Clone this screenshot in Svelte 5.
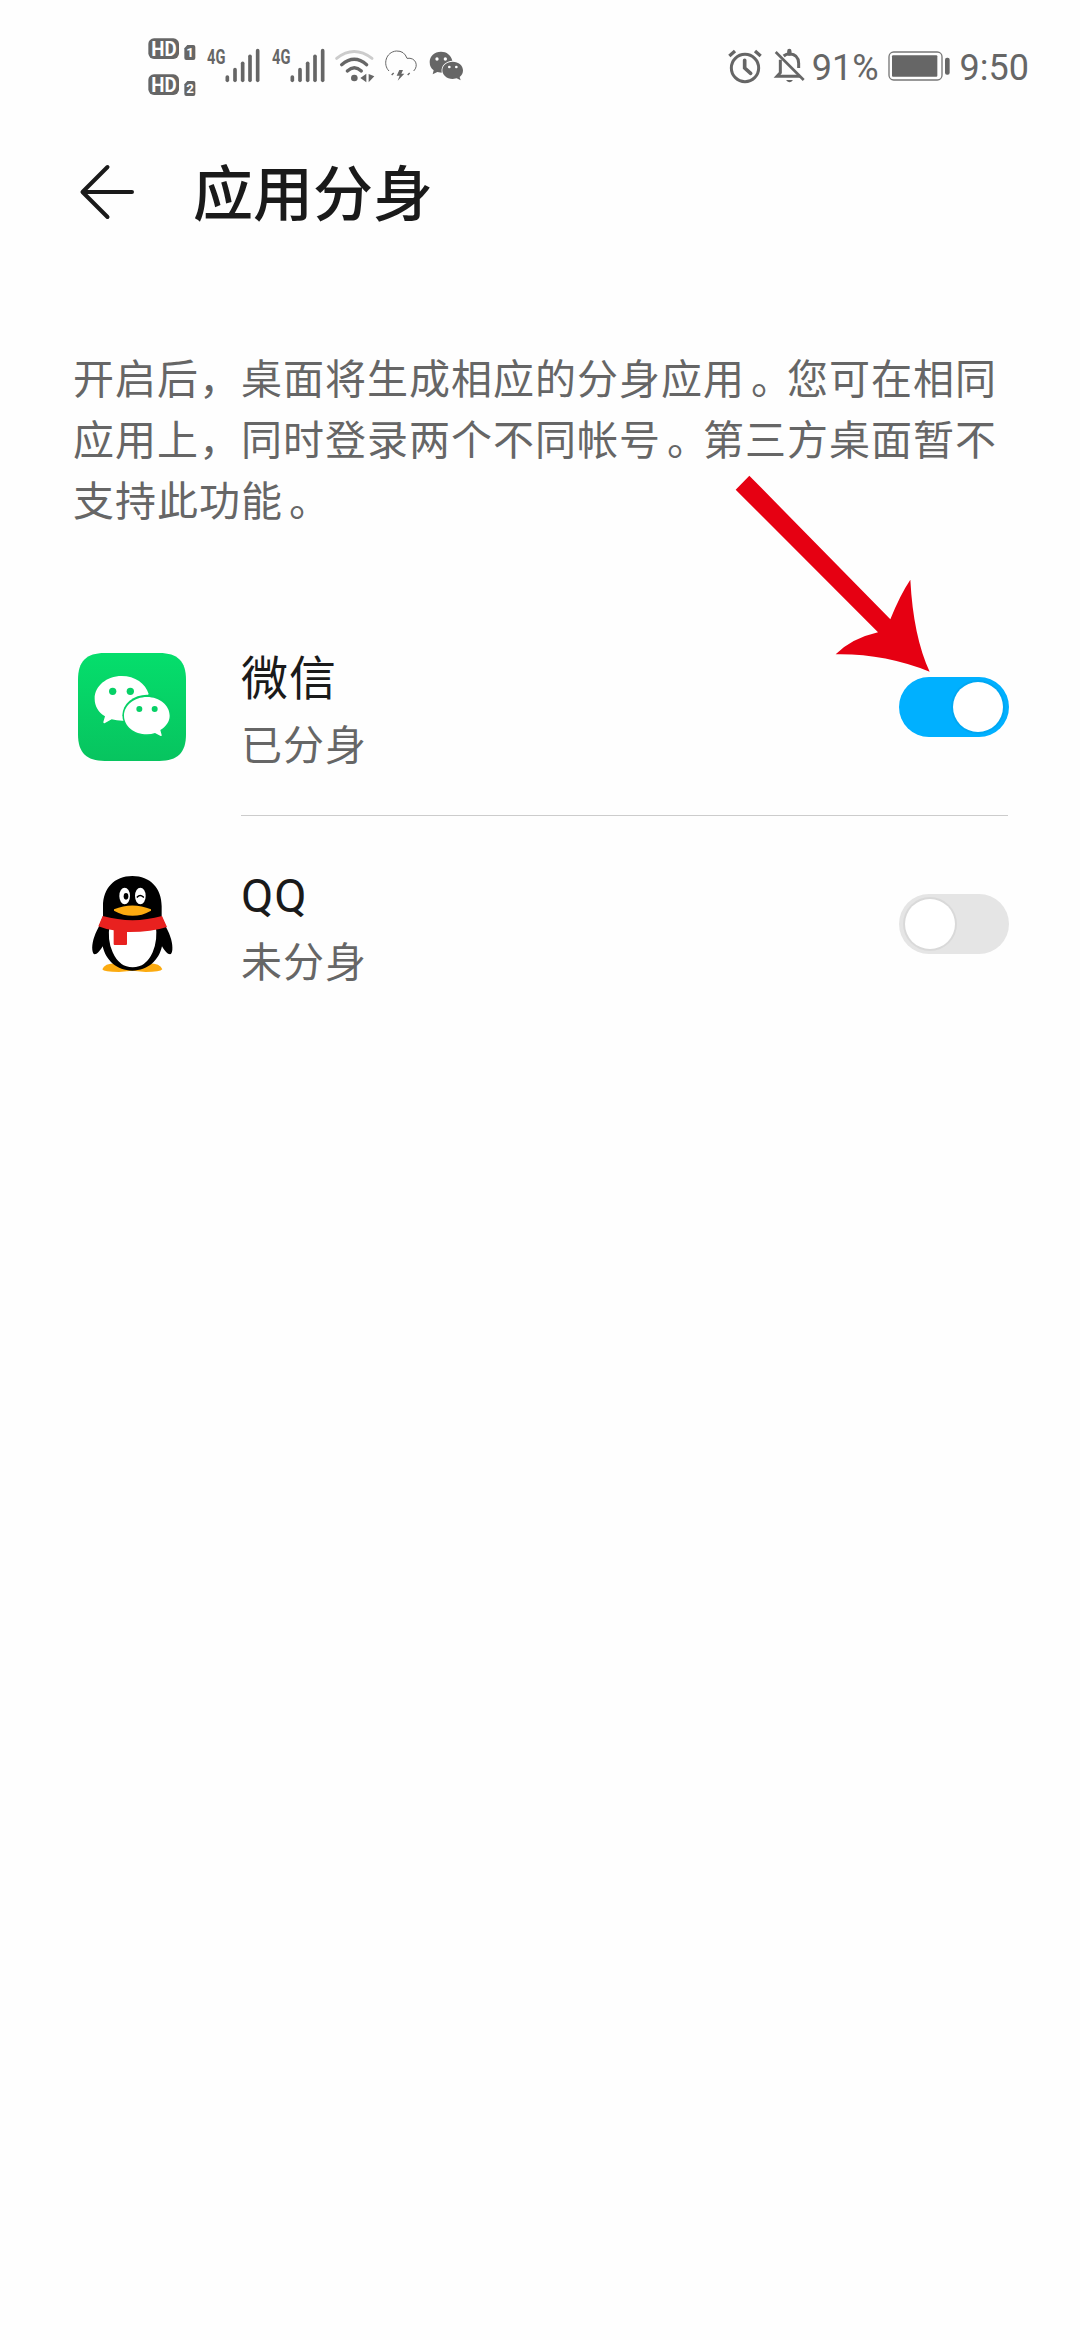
<script lang="ts">
	type App = { id: string; name: string; status: string; cloned: boolean };

	let apps: App[] = $state([
		{ id: 'wechat', name: '微信', status: '已分身', cloned: true },
		{ id: 'qq', name: 'QQ', status: '未分身', cloned: false }
	]);

	const sims = [1, 2];
	const bars = [
		{ x: 5, top: 86 },
		{ x: 28, top: 64 },
		{ x: 51, top: 45 },
		{ x: 73, top: 24 },
		{ x: 96, top: 7 }
	];

	function toggle(app: App) {
		app.cloned = !app.cloned;
		app.status = app.cloned ? '已分身' : '未分身';
	}
</script>

<div class="screen">
	<div class="statusbar">
		<div class="left">
			<div class="hd">
				{#each sims as sim}
					<svg width="48" height="22" viewBox="0 0 144 66">
						<rect x="1" y="1" width="92" height="62" rx="17" fill="#666" />
						<text x="10" y="53" class="hdtext" textLength="76" lengthAdjust="spacingAndGlyphs">HD</text>
						<path d="M109 31l9-10h18q6 0 6 6v33q0 6-6 6h-21q-6 0-6-6z" fill="#666" />
						<text x="126" y="58" class="simtext">{sim}</text>
					</svg>
				{/each}
			</div>
			{#each sims as sim}
				<svg class="signal" width="54" height="36" viewBox="0 0 162 108">
					<text x="0" y="48" class="net" textLength="55" lengthAdjust="spacingAndGlyphs">4G</text>
					{#each bars as bar}
						<path d="M{bar.x + 56} {bar.top + 1}V97" stroke="#666" stroke-width="11" stroke-linecap="round" />
					{/each}
				</svg>
			{/each}
			<svg class="wifi" width="40" height="36" viewBox="0 0 120 108" fill="none" stroke-linecap="round">
				<path d="M5 31Q57-10 111 31" stroke="#ccc" stroke-width="9" />
				<path d="M20 50Q58 18 95 50" stroke="#666" stroke-width="10" />
				<path d="M37 69Q58 50 79 69" stroke="#666" stroke-width="10" />
				<circle cx="58" cy="90" r="10" fill="#666" />
				<path d="M76 90l18-13v26zM118 85l-17-7v25z" fill="#666" />
			</svg>
			<svg class="cloud" width="32" height="34" viewBox="0 0 96 102" fill="none" stroke="#666" stroke-width="3">
				<path d="M12 66C-7 47 2 9 34 6q24-1 32 22c26-4 36 22 20 38" />
				<path d="M43 63h11l-5 11h9L38 95l6-15h-9z" fill="#666" stroke="none" />
				<path d="M26 72l-6 6M74 72l-6 6" stroke-width="4" />
			</svg>
			<svg class="chat" width="35" height="34" viewBox="0 0 105 102" fill="#666">
				<path d="M36 8C16 8 2 22 2 39q0 16 12 25l-3 12 14-7 13 2C35 46 52 37 70 35 66 18 53 8 36 8z" />
				<path d="M71 38c-18 0-31 12-31 26s13 26 31 26l12-2 12 6-3-10c7-5 10-12 10-20 0-14-13-26-31-26z" />
				<g fill="#fff">
					<circle cx="24" cy="30" r="5" /><circle cx="49" cy="30" r="5" />
					<circle cx="61" cy="54" r="4" /><circle cx="82" cy="54" r="4" />
				</g>
			</svg>
		</div>
		<div class="right">
			<svg width="34" height="36" viewBox="0 0 102 108" fill="none" stroke="#666" stroke-width="9">
				<circle cx="51" cy="60" r="41" />
				<path d="M50 37v23l18 16" stroke-width="11" stroke-linecap="round" />
				<path d="M4 24L21 9M98 24L81 9" stroke-width="10" />
			</svg>
			<svg class="bell" width="32" height="36" viewBox="0 0 96 108" fill="none" stroke="#666" stroke-width="9">
				<path d="M19 35v39L9 85h69M29 24q8-7 17-7 28 2 28 29v14" />
				<path d="M46 17V9" stroke-width="13" stroke-linecap="round" />
				<path d="M5 12l84 84" stroke-width="8" />
				<path d="M36 96h21q-10 14-21 0z" fill="#666" stroke="none" />
			</svg>
			<span class="percent">91%</span>
			<svg class="battery" width="62" height="30" viewBox="0 0 186 90">
				<rect x="3" y="3" width="159" height="84" rx="14" fill="none" stroke="#777" stroke-width="4" />
				<rect x="12" y="13" width="136" height="64" rx="3" fill="#666" />
				<rect x="171" y="20" width="14" height="51" rx="6" fill="#666" />
			</svg>
			<span class="time">9:50</span>
		</div>
	</div>

	<header>
		<svg width="54" height="56" viewBox="0 0 54 56" fill="none" stroke="#1a1a1a" stroke-width="4" stroke-linecap="round" stroke-linejoin="round">
			<path d="M52 28H3M27.5 3L2.5 28l25 25" />
		</svg>
		<h1>应用分身</h1>
	</header>

	<p class="about">开启后，桌面将生成相应的分身应用<span class="stop">。</span>您可在相同应用上，同时登录两个不同帐号<span class="stop">。</span>第三方桌面暂不支持此功能<span class="stop">。</span></p>

	<div class="apps">
		{#each apps as app (app.id)}
			<div class="row">
				{#if app.id === 'wechat'}
					<svg class="icon" viewBox="0 0 324 324">
						<defs>
							<linearGradient id="green" x1="0" y1="0" x2="0" y2="1">
								<stop offset="0" stop-color="#05de6c" />
								<stop offset="1" stop-color="#07c45f" />
							</linearGradient>
						</defs>
						<path d="M80 0H244C299 0 324 25 324 80V244C324 299 299 324 244 324H80C25 324 0 299 0 244V80C0 25 25 0 80 0Z" fill="url(#green)" />
						<path d="M131 69C86 69 50 99 50 137c0 22 11 41 31 53l-5 17q0 5 5 3l20-11q15 4 32 4h20l59-80C203 92 171 69 131 69z" fill="#fff" />
						<ellipse cx="207" cy="187" rx="74" ry="62" fill="#06d066" />
						<path d="M207 132c-38 0-69 25-69 56s31 56 69 56q13 0 24-4l17 9q4 1 3-3l-4-15c17-11 28-25 28-43 0-31-30-56-68-56z" fill="#fff" />
						<g fill="#06d066">
							<circle cx="104" cy="115" r="11" /><circle cx="157" cy="115" r="11" />
							<circle cx="184" cy="168" r="9" /><circle cx="230" cy="168" r="9" />
						</g>
					</svg>
				{:else}
					<svg class="icon" viewBox="24 60 324 324">
						<path d="M97 358q6-18 40-18h100q34 0 40 18-6 8-50 8l-40-4-40 4q-46 0-50-8z" fill="#fcab10" />
						<path d="M187 78c-54 0-88 37-88 91v30l-13 32c-14 26-21 50-19 69q2 13 7 13c7 0 16-10 24-24 9 42 43 73 89 73s80-31 89-73c8 14 17 24 24 24q5 0 7-13c2-19-5-43-19-69l-13-32v-30c0-54-34-91-88-91z" />
						<path d="M119 225q-8 44 9 82 20 45 60 45t60-45q16-38 9-82z" fill="#fff" />
						<path d="M98 198q90 25 178 0l15 33q-50 16-120 15v36q0 3-3 3h-34q-3 0-3-3v-41q-27-4-46-12z" fill="#e8211f" />
						<ellipse cx="164" cy="138" rx="16" ry="25" fill="#fff" />
						<ellipse cx="211" cy="138" rx="16" ry="25" fill="#fff" />
						<ellipse cx="168" cy="139" rx="7" ry="10" />
						<path d="M202 141q8-9 18 0" fill="none" stroke="#000" stroke-width="5" stroke-linecap="round" />
						<path d="M132 178q55-23 111 0v4q-55 31-111 0z" fill="#fcab10" />
					</svg>
				{/if}
				<div class="body">
					<div class="text">
						<span class="name">{app.name}</span>
						<span class="status">{app.status}</span>
					</div>
					<button class="switch" class:on={app.cloned} aria-label={app.name} onclick={() => toggle(app)}>
						<span class="knob"></span>
					</button>
				</div>
			</div>
		{/each}
	</div>

	<svg class="pointer" viewBox="45 45 588 594">
		<path d="M88 47L511 478Q540 405 571 359Q580 530 629 635Q490 580 347 583Q395 535 474 517L47 89Z" fill="#e60012" />
	</svg>
</div>

<style>
	:global(body) {
		background: #fefefe;
	}
	.screen {
		position: relative;
		box-sizing: border-box;
		width: 1080px;
		height: 2340px;
		overflow: hidden;
		background: #fefefe;
		color: #1a1a1a;
		font-family: Roboto, "Noto Sans CJK SC", sans-serif;
	}
	svg {
		display: block;
		flex-shrink: 0;
		overflow: visible;
	}
	.statusbar {
		display: flex;
		justify-content: space-between;
		align-items: center;
		height: 132px;
		padding: 0 51px 0 148px;
	}
	.left, .right {
		display: flex;
		align-items: center;
	}
	.hd {
		display: flex;
		flex-direction: column;
		gap: 14px;
		padding-top: 1px;
	}
	.hdtext {
		font: 700 60px Roboto, sans-serif;
		fill: #fff;
	}
	.simtext {
		font: 700 40px Roboto, sans-serif;
		fill: #fff;
		text-anchor: middle;
	}
	.net {
		font: 700 60px Roboto, sans-serif;
		fill: #666;
	}
	.signal {
		margin-left: 11px;
	}
	.wifi {
		margin-left: 9px;
	}
	.cloud {
		margin-left: 10px;
	}
	.chat {
		margin-left: 12px;
	}
	.bell {
		margin-left: 12px;
	}
	.percent, .time {
		padding-top: 3px;
		color: #666;
		font-size: 36px;
		line-height: 42px;
	}
	.percent {
		margin-left: 6px;
	}
	.battery {
		margin-left: 9px;
	}
	.time {
		margin-left: 10px;
	}
	header {
		display: flex;
		align-items: center;
		gap: 59px;
		height: 120px;
		padding-left: 80px;
	}
	h1 {
		margin: 0;
		padding-top: 8px;
		font-size: 60px;
		font-weight: 500;
		line-height: 84px;
	}
	.about {
		margin: 98px 71px 0 73px;
		width: 936px;
		color: #666;
		font-size: 41px;
		letter-spacing: 1px;
		line-height: 61px;
	}
	.stop {
		margin: 0 -6px 0 6px;
	}
	.apps {
		margin-top: 66px;
		padding: 0 72px 0 78px;
	}
	.row {
		display: flex;
		align-items: center;
		gap: 55px;
		height: 217px;
	}
	.icon {
		width: 108px;
		height: 108px;
		margin-bottom: 1px;
	}
	.body {
		flex: 1;
		display: flex;
		align-items: center;
		justify-content: space-between;
		box-sizing: border-box;
		height: 217px;
		border-bottom: 1px solid #ccc;
	}
	.row:last-child .body {
		border-bottom-color: transparent;
	}
	.text {
		display: flex;
		flex-direction: column;
		padding-top: 10px;
	}
	.name {
		font-size: 47px;
		letter-spacing: 1px;
		line-height: 68px;
	}
	.status {
		color: #666;
		font-size: 41px;
		letter-spacing: 1px;
		line-height: 67px;
	}
	.switch {
		display: flex;
		width: 110px;
		height: 60px;
		margin-right: -1px;
		padding: 5px 6px;
		border: none;
		border-radius: 30px;
		background: #e5e5e5;
	}
	.switch.on {
		justify-content: flex-end;
		background: #00b0ff;
	}
	.knob {
		width: 50px;
		height: 50px;
		border-radius: 50%;
		background: #fff;
		box-shadow: 0 0 0 2px rgba(0, 0, 0, 0.05);
	}
	/* lies over the text and the first switch */
	.pointer {
		position: absolute;
		left: 735px;
		top: 475px;
		width: 196px;
		height: 198px;
	}
</style>
